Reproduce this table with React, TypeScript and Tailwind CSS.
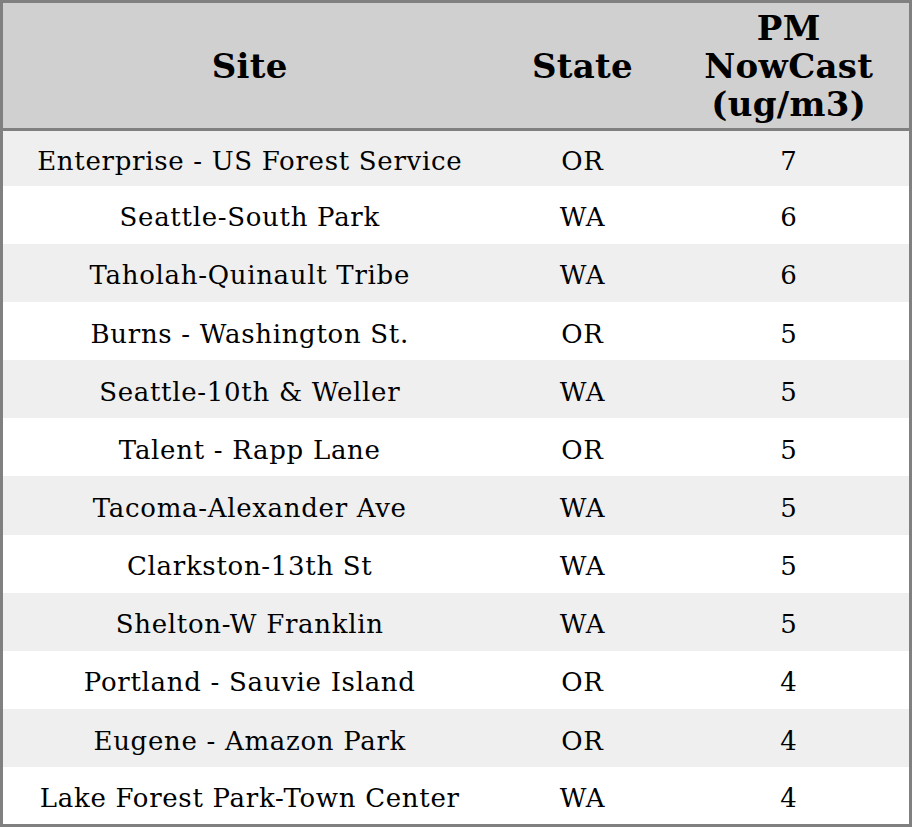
const rows: [string, string, number][] = [
  ["Enterprise - US Forest Service", "OR", 7],
  ["Seattle-South Park", "WA", 6],
  ["Taholah-Quinault Tribe", "WA", 6],
  ["Burns - Washington St.", "OR", 5],
  ["Seattle-10th & Weller", "WA", 5],
  ["Talent - Rapp Lane", "OR", 5],
  ["Tacoma-Alexander Ave", "WA", 5],
  ["Clarkston-13th St", "WA", 5],
  ["Shelton-W Franklin", "WA", 5],
  ["Portland - Sauvie Island", "OR", 4],
  ["Eugene - Amazon Park", "OR", 4],
  ["Lake Forest Park-Town Center", "WA", 4],
];

export default function App() {
  return (
    <div className="w-[912px] h-[827px] bg-white font-['DejaVu_Serif',serif] text-black">
      <table className="w-full h-[827px] border-collapse border-[3px] border-[#808080] table-fixed">
        <colgroup>
          <col className="w-[495px]" />
          <col className="w-[172px]" />
          <col />
        </colgroup>
        <thead>
          <tr className="bg-[#d0d0d0] h-[128px] border-b-[3px] border-[#808080]">
            <th className="p-0 text-[34px] leading-[38px] tracking-[0.3px] font-bold text-center">Site</th>
            <th className="p-0 text-[34px] leading-[38px] tracking-[0.3px] font-bold text-center">State</th>
            <th className="p-0 text-[34px] leading-[38px] tracking-[0.3px] font-bold text-center">
              PM
              <br />
              NowCast
              <br />
              (ug/m3)
            </th>
          </tr>
        </thead>
        <tbody>
          {rows.map(([site, state, v], i) => (
            <tr
              key={site}
              className={`${i % 2 === 0 ? "bg-[#efefef]" : "bg-white"} ${i === 0 ? "h-[56px]" : "h-[58px]"}`}
            >
              <td className="p-0 pt-[6px] text-[26px] tracking-[0.7px] text-center">{site}</td>
              <td className="p-0 pt-[6px] text-[26px] tracking-[0.7px] text-center">{state}</td>
              <td className="p-0 pt-[6px] text-[26px] tracking-[0.7px] text-center">{v}</td>
            </tr>
          ))}
        </tbody>
      </table>
    </div>
  );
}
